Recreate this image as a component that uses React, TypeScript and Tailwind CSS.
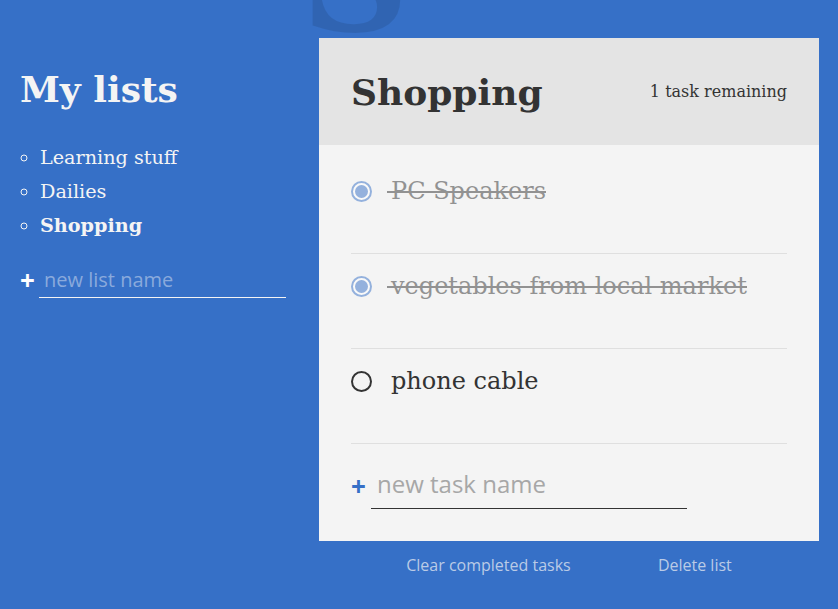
const serif = { fontFamily: '"DejaVu Serif", serif' };
const sans = { fontFamily: '"Open Sans", sans-serif' };

type Task = { id: number; name: string; done: boolean };

const lists = [
  { id: 1, name: 'Learning stuff' },
  { id: 2, name: 'Dailies' },
  { id: 3, name: 'Shopping' },
];

const tasks: Task[] = [
  { id: 1, name: 'PC Speakers', done: true },
  { id: 2, name: 'vegetables from local market', done: true },
  { id: 3, name: 'phone cable', done: false },
];

const TaskRow = ({ task }: { task: Task }) => (
  <div className="pb-12 mb-[18px] border-b border-[#dfdfdf]">
    <div className={`flex items-center h-7 ${task.done ? 'opacity-50' : ''}`}>
      {task.done ? (
        <span className="w-[21px] h-[21px] rounded-full border-2 border-[#3670c7] bg-white p-[2px] mr-[19px] shrink-0">
          <span className="block w-full h-full rounded-full bg-[#3670c7]" />
        </span>
      ) : (
        <span className="w-[21px] h-[21px] rounded-full border-2 border-[#333] mr-[19px] shrink-0" />
      )}
      <span className="relative text-[24px] leading-7 text-[#333]" style={serif}>
        {task.name}
        {task.done && <span className="absolute -left-1 right-0 top-1/2 h-[2px] bg-[#333]" />}
      </span>
    </div>
  </div>
);

export default function App() {
  return (
    <div className="relative overflow-hidden min-h-[609px] bg-[#3670c7] text-[#f4f4f4]">
      <span
        className="absolute left-[301px] top-[-97px] text-[150px] leading-none font-bold text-black/10 select-none"
        style={serif}
        aria-hidden="true"
      >
        S
      </span>

      <div className="relative grid grid-cols-[267px_500px] gap-x-8 pl-5 pt-[38px]">
        <aside className="pt-8">
          <h2 className="text-[36px] leading-[38px] font-bold" style={serif}>
            My lists
          </h2>
          <ul className="mt-[33px] pl-5 list-[circle] text-[19.2px] leading-[34px]" style={serif}>
            {lists.map((l) => (
              <li key={l.id} className={l.name === 'Shopping' ? 'font-bold' : ''}>
                {l.name}
              </li>
            ))}
          </ul>
          <form className="mt-[23px] flex items-center" style={sans}>
            <button type="button" className="w-[19px] text-left text-[26px] font-bold leading-none text-white -mt-1">
              +
            </button>
            <input
              className="w-[247px] bg-transparent border-b border-[#f4f4f4] pl-[5px] pb-1 text-[20px] leading-[27px] outline-none placeholder:text-[#8aaadc]"
              placeholder="new list name"
            />
          </form>
        </aside>

        <main>
          <div className="bg-[#f4f4f4] text-[#333]">
            <header className="bg-[#e4e4e4] h-[107px] px-8 flex items-center justify-between" style={serif}>
              <h2 className="text-[36px] leading-[38px] font-bold">Shopping</h2>
              <p className="text-[16px] leading-none pt-px">1 task remaining</p>
            </header>
            <div className="px-8 pt-8 pb-8">
              {tasks.map((t) => (
                <TaskRow key={t.id} task={t} />
              ))}
              <form className="flex items-center pt-[5px]" style={sans}>
                <button type="button" className="w-[20px] text-left text-[26px] font-bold leading-none text-[#3670c7] -mt-1">
                  +
                </button>
                <input
                  className="w-[316px] bg-transparent border-b border-[#333] pl-[6px] pb-2 text-[24px] leading-[33px] outline-none placeholder:text-[#a7a7a7]"
                  placeholder="new task name"
                />
              </form>
            </div>
          </div>
          <div className="flex justify-evenly mt-[13px] text-[16px] leading-[22px] text-[#bacbe6]" style={sans}>
            <button type="button">Clear completed tasks</button>
            <button type="button">Delete list</button>
          </div>
        </main>
      </div>
    </div>
  );
}
